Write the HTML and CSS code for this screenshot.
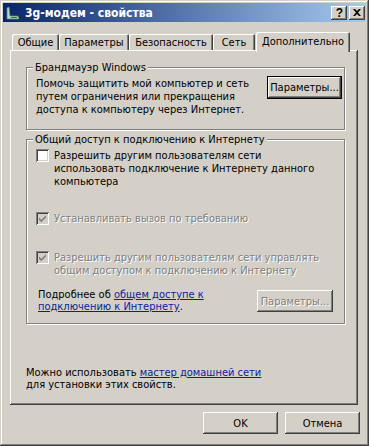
FILE: index.html
```html
<!DOCTYPE html>
<html lang="ru">
<head>
<meta charset="utf-8">
<title>3g-модем - свойства</title>
<link rel="stylesheet" href="styles.css">
</head>
<body>
<div class="window">
  <div class="titlebar">
    <svg class="appicon" width="16" height="16" viewBox="0 0 16 16">
      <path d="M2 3 L4 2 L5 11 L13 11 L14 14 L2 14 Z" fill="#b8d8c0" stroke="#5a8a70" stroke-width="0.8"/>
      <rect x="6" y="12" width="6" height="1" fill="#3a6a58"/>
    </svg>
    <span class="title">3g-модем - свойства</span>
    <div class="tb-buttons">
      <span class="tb-btn help">?</span>
      <span class="tb-btn close"><svg width="8" height="7" viewBox="0 0 8 7"><path d="M0 0 L2 0 L4 2 L6 0 L8 0 L5 3.5 L8 7 L6 7 L4 5 L2 7 L0 7 L3 3.5 Z" fill="#000"/></svg></span>
    </div>
  </div>
  <div class="content">
    <div class="tabs">
      <div class="tab t1">Общие</div>
      <div class="tab t2">Параметры</div>
      <div class="tab t3">Безопасность</div>
      <div class="tab t4">Сеть</div>
      <div class="tab active">Дополнительно</div>
    </div>
    <div class="panel">
      <fieldset class="group g1">
        <legend>Брандмауэр Windows</legend>
        <div class="fw-row">
          <p class="fw-text">Помочь защитить мой компьютер и сеть<br>путем ограничения или прекращения<br>доступа к компьютеру через Интернет.</p>
          <button class="btn default fw-btn">Параметры...</button>
        </div>
      </fieldset>
      <fieldset class="group g2">
        <legend>Общий доступ к подключению к Интернету</legend>
        <div class="check">
          <span class="box"></span>
          <span class="ctext">Разрешить другим пользователям сети<br>использовать подключение к Интернету данного<br>компьютера</span>
        </div>
        <div class="check disabled row2">
          <span class="box"><svg width="9" height="9" viewBox="0 0 9 9"><path d="M1 3.5 L3.3 5.8 L8 1.2 L8 3.6 L3.3 8.2 L1 5.9 Z" fill="#808080"/></svg></span>
          <span class="ctext">Устанавливать вызов по требованию</span>
        </div>
        <div class="check disabled row3">
          <span class="box"><svg width="9" height="9" viewBox="0 0 9 9"><path d="M1 3.5 L3.3 5.8 L8 1.2 L8 3.6 L3.3 8.2 L1 5.9 Z" fill="#808080"/></svg></span>
          <span class="ctext">Разрешить другим пользователям сети управлять<br>общим доступом к подключению к Интернету</span>
        </div>
        <div class="info-row">
          <p class="info-text">Подробнее об <a href="#" class="link">общем доступе к<br>подключению к Интернету</a>.</p>
          <button class="btn disabled-btn info-btn" disabled>Параметры...</button>
        </div>
      </fieldset>
      <p class="footer-text">Можно использовать <a href="#" class="link">мастер домашней сети</a><br>для установки этих свойств.</p>
    </div>
    <div class="buttons">
      <button class="btn dlg-btn">OK</button>
      <button class="btn dlg-btn">Отмена</button>
    </div>
  </div>
</div>
</body>
</html>
```

FILE: styles.css
```css
* { box-sizing: border-box; }
html, body { margin: 0; padding: 0; background: #d4d0c8; }
body {
  font-family: Tahoma, "DejaVu Sans Condensed", "DejaVu Sans", sans-serif;
  font-size: 11px;
  color: #000;
}
.window {
  width: 369px;
  height: 446px;
  padding: 3px;
  background: #d4d0c8;
  box-shadow: inset -1px -1px #404040, inset 1px 1px #d4d0c8, inset -2px -2px #808080, inset 2px 2px #fff;
}
.titlebar {
  height: 19px;
  display: flex;
  align-items: center;
  padding: 0 1px 0 2px;
  background: linear-gradient(to right, #0a246a, #a6caf0);
}
.appicon { flex: none; margin-right: 4px; }
.title {
  color: #fff;
  font-weight: bold;
  font-size: 12px;
  white-space: nowrap;
  flex: 1;
}
.tb-buttons { display: flex; gap: 2px; }
.tb-btn {
  width: 16px;
  height: 14px;
  display: flex;
  align-items: center;
  justify-content: center;
  background: #d4d0c8;
  box-shadow: inset -1px -1px #404040, inset 1px 1px #fff, inset -2px -2px #808080, inset 2px 2px #d4d0c8;
}
.help {
  font-family: "Liberation Sans", Arial, sans-serif;
  font-weight: bold;
  font-size: 12px;
  line-height: 14px;
  padding-left: 1px;
}
.content { padding: 10px 6px 0 7px; }
.tabs {
  position: relative;
  z-index: 1;
  display: flex;
  align-items: flex-end;
  height: 20px;
  margin: 0 0 -2px 2px;
}
.tab {
  height: 16px;
  margin-bottom: 2px;
  line-height: 16px;
  text-align: center;
  white-space: nowrap;
  background: #d4d0c8;
  border-radius: 2px 2px 0 0;
  box-shadow: inset 1px 1px #fff, inset -1px 0 #404040, inset -2px 0 #808080;
  padding-top: 1px;
  flex: none;
}
.t1 { width: 47px; }
.t2 { width: 70px; }
.t3 { width: 84px; }
.t4 { width: 42px; }
.tab.active {
  width: 94px;
  height: 20px;
  margin: 0 0 0 1px;
  line-height: 17px;
  padding-top: 1px;
}
.panel {
  height: 355px;
  margin-right: 2px;
  padding: 2px;
  box-shadow: inset -1px -1px #404040, inset 1px 1px #fff, inset -2px -2px #808080;
  overflow: hidden;
}
.group {
  margin: 0 0 0 14px;
  width: 319px;
  min-inline-size: 0;
  border: 1px solid #808080;
  box-shadow: inset 1px 1px #fff, 1px 1px #fff;
}
.group legend {
  margin-left: -3px;
  padding: 0 2px;
  line-height: 13px;
  background: #d4d0c8;
  white-space: nowrap;
}
.g1 { margin-top: 9px; padding: 2px 2px 13px 9px; }
.fw-row { display: flex; justify-content: space-between; align-items: flex-start; }
.fw-text { margin: 0; padding-top: 1px; line-height: 13px; white-space: nowrap; }
.btn {
  font: inherit;
  color: #000;
  background: #d4d0c8;
  border: none;
  padding: 0;
  margin: 0;
  width: 75px;
  height: 22px;
  white-space: nowrap;
  box-shadow: inset -1px -1px #404040, inset 1px 1px #fff, inset -2px -2px #808080, inset 2px 2px #d4d0c8;
}
.btn.default {
  border: 1px solid #000;
  box-shadow: inset -1px -1px #404040, inset 1px 1px #fff, inset -2px -2px #808080;
}
.fw-btn { height: 23px; }
.g2 { margin-top: 3px; padding: 3px 2px 10px 9px; }
.check { display: flex; align-items: flex-start; gap: 5px; line-height: 13px; white-space: nowrap; }
.box {
  flex: none;
  width: 13px;
  height: 13px;
  display: flex;
  align-items: center;
  justify-content: center;
  background: #fff;
  box-shadow: inset 1px 1px #808080, inset -1px -1px #fff, inset 2px 2px #404040, inset -2px -2px #d4d0c8;
}
.check.disabled .box { background: #d4d0c8; }
.check.disabled .ctext { color: #808080; text-shadow: 1px 1px 0 #fff; }
.row2 { margin-top: 24px; }
.row3 { margin-top: 26px; }
.info-row {
  display: flex;
  justify-content: space-between;
  align-items: flex-start;
  margin-top: 12px;
  padding-left: 2px;
}
.info-text { margin: 0; line-height: 12px; white-space: nowrap; }
.link { color: #0c1d9a; text-decoration: underline; }
.info-btn { margin: 1px 9px 0 0; width: 76px; }
.disabled-btn { color: #808080; text-shadow: 1px 1px 0 #fff; }
.footer-text { margin: 43px 0 0 14px; line-height: 12px; white-space: nowrap; }
.buttons {
  display: flex;
  justify-content: flex-end;
  gap: 7px;
  margin-top: 7px;
}
.dlg-btn { height: 22px; }
```
